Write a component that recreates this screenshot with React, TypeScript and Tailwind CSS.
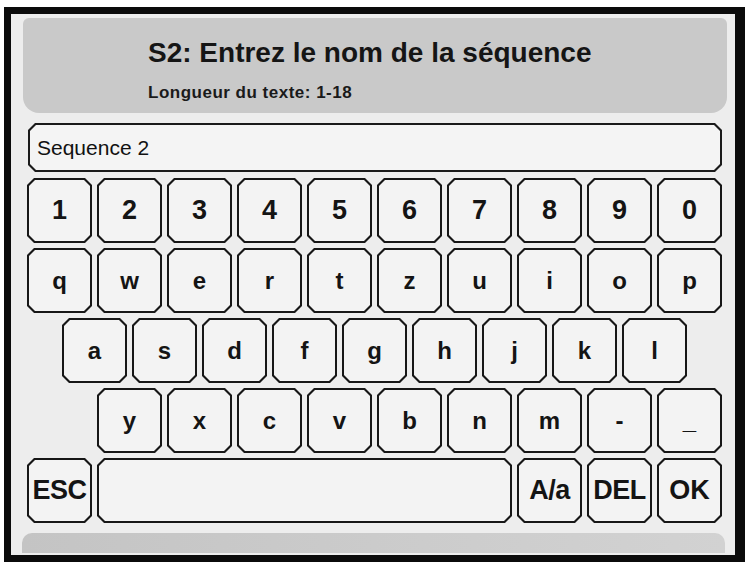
import type { ReactNode } from 'react';

const outerCut =
  '[clip-path:polygon(7px_0,calc(100%_-_7px)_0,100%_7px,100%_calc(100%_-_7px),calc(100%_-_7px)_100%,7px_100%,0_calc(100%_-_7px),0_7px)]';
const innerCut =
  '[clip-path:polygon(6px_0,calc(100%_-_6px)_0,100%_6px,100%_calc(100%_-_6px),calc(100%_-_6px)_100%,6px_100%,0_calc(100%_-_6px),0_6px)]';

function Key({ children, className = 'w-[65px]', label = 'text-[24px]' }: { children?: ReactNode; className?: string; label?: string }) {
  return (
    <div className={`${className} h-[65px] bg-[#161616] p-[2px] ${outerCut}`}>
      <div
        className={`w-full h-full bg-[#f3f3f3] flex items-center justify-center font-bold text-[#141414] leading-none ${label} ${innerCut}`}
      >
        {children}
      </div>
    </div>
  );
}

const digits = ['1', '2', '3', '4', '5', '6', '7', '8', '9', '0'];
const row2 = ['q', 'w', 'e', 'r', 't', 'z', 'u', 'i', 'o', 'p'];
const row3 = ['a', 's', 'd', 'f', 'g', 'h', 'j', 'k', 'l'];
const row4 = ['y', 'x', 'c', 'v', 'b', 'n', 'm', '-', '_'];

export default function App() {
  return (
    <div className="w-[745px] h-[562px] bg-white pt-[7px] pl-[4px] font-['Liberation_Sans',Arial,sans-serif]">
      <div className="w-[741px] h-[555px] border-t-[7px] border-l-[7px] border-r-[10px] border-b-[7px] border-[#0b0b0b]">
        <div className="w-full h-full bg-[#ededed] flex flex-col">
          {/* Header */}
          <div className="ml-[12px] mt-[4px] w-[704px] h-[95px] bg-[#c9c9c9] rounded-t-[6px] rounded-b-[16px] pl-[125px] pt-[19px]">
            <div className="text-[28px] leading-[32px] font-bold text-[#151515] whitespace-nowrap">
              S2: Entrez le nom de la séquence
            </div>
            <div className="mt-[14px] text-[17px] leading-[20px] font-bold tracking-[0.5px] text-[#1a1a1a] whitespace-nowrap">
              Longueur du texte: 1-18
            </div>
          </div>

          {/* Input field */}
          <div className={`ml-[17px] mt-[10px] w-[694px] h-[49px] bg-[#1a1a1a] p-[2px] ${outerCut}`}>
            <div className={`w-full h-full bg-[#f4f4f4] flex items-center pl-[7px] text-[21px] leading-[21px] text-[#111] ${innerCut}`}>
              Sequence 2
            </div>
          </div>

          {/* Keyboard */}
          <div className="ml-[16px] mt-[6px] flex flex-col gap-[5px]">
            <div className="flex gap-[5px]">
              {digits.map((k) => (
                <Key key={k} label="text-[27px]">
                  {k}
                </Key>
              ))}
            </div>
            <div className="flex gap-[5px]">
              {row2.map((k) => (
                <Key key={k}>{k}</Key>
              ))}
            </div>
            <div className="flex gap-[5px] pl-[35px]">
              {row3.map((k) => (
                <Key key={k}>{k}</Key>
              ))}
            </div>
            <div className="flex gap-[5px] pl-[70px]">
              {row4.map((k) => (
                <Key key={k}>{k}</Key>
              ))}
            </div>
            <div className="flex gap-[5px]">
              <Key label="text-[27px] tracking-[-0.5px]">ESC</Key>
              <Key className="w-[415px]" />
              <Key label="text-[27px] tracking-[-0.5px]">A/a</Key>
              <Key label="text-[27px] tracking-[-0.5px]">DEL</Key>
              <Key label="text-[27px]">OK</Key>
            </div>
          </div>

          {/* Bottom bar */}
          <div className="ml-[11px] mt-[10px] w-[703px] h-[20px] rounded-t-[10px] bg-gradient-to-r from-[#c4c4c4] via-[#cbcbcb] to-[#d2d2d2]" />
        </div>
      </div>
    </div>
  );
}
